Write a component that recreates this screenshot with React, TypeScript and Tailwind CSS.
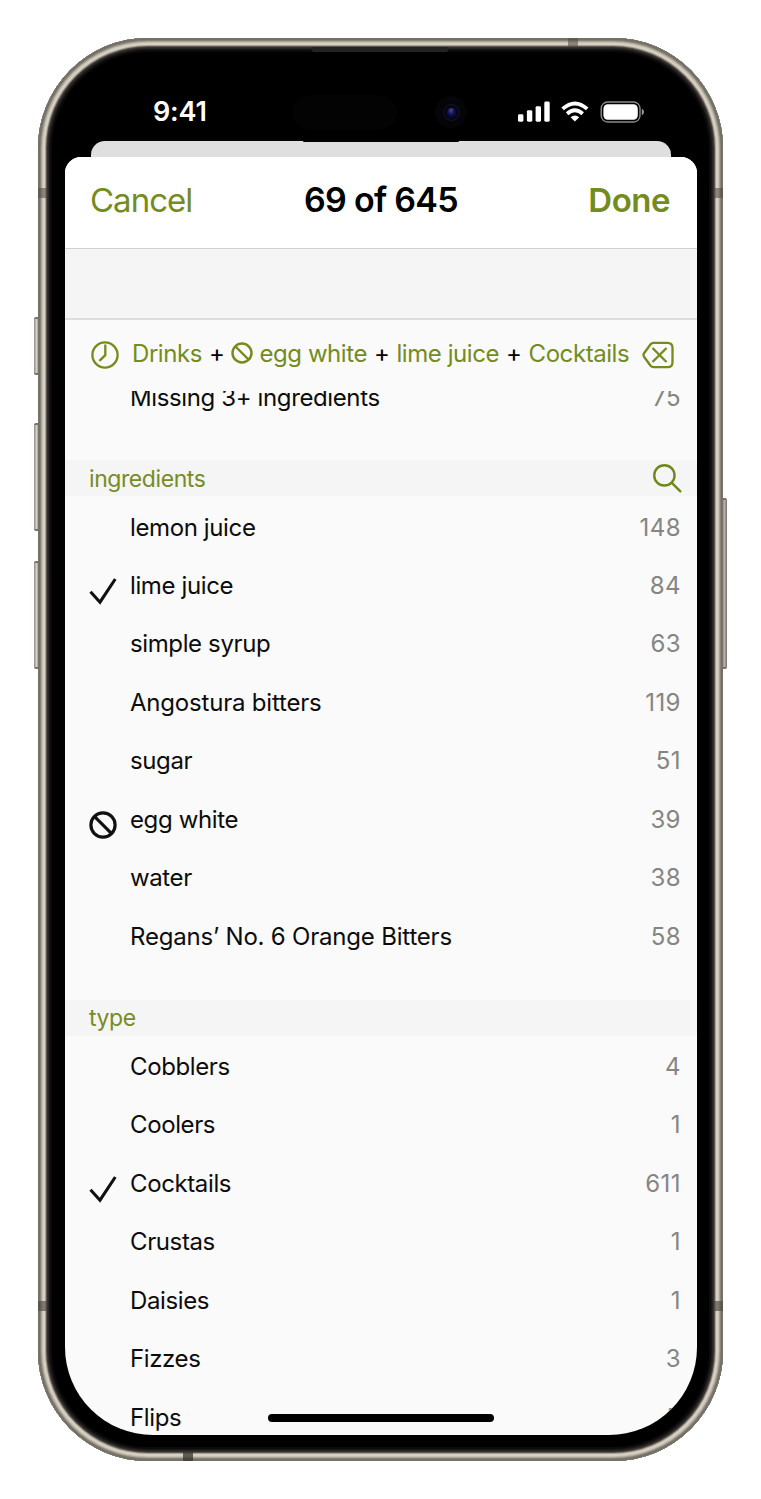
import React from "react";

type Mark = "check" | "ban";
type Item = { name: string; count: string; mark?: Mark; wide?: boolean };

const ingredients: Item[] = [
  { name: "lemon juice", count: "148" },
  { name: "lime juice", count: "84", mark: "check" },
  { name: "simple syrup", count: "63" },
  { name: "Angostura bitters", count: "119", wide: true },
  { name: "sugar", count: "51" },
  { name: "egg white", count: "39", mark: "ban" },
  { name: "water", count: "38" },
  { name: "Regans’ No. 6 Orange Bitters", count: "58", wide: true },
];

const types: Item[] = [
  { name: "Cobblers", count: "4" },
  { name: "Coolers", count: "1" },
  { name: "Cocktails", count: "611", mark: "check" },
  { name: "Crustas", count: "1" },
  { name: "Daisies", count: "1" },
  { name: "Fizzes", count: "3" },
  { name: "Flips", count: "5" },
];

function CheckIcon() {
  return (
    <svg width="28" height="28" viewBox="0 0 28 28" fill="none" stroke="#111" strokeWidth="3.1">
      <path d="M1.5 14.8 L11 25.2 L26.3 2" />
    </svg>
  );
}

function BanIcon({ size, stroke }: { size: number; stroke: number }) {
  return (
    <svg width={size} height={size} viewBox="0 0 28 28" fill="none" stroke="currentColor" strokeWidth={stroke}>
      <circle cx="14" cy="14" r="12.1" />
      <path d="M5.4 5.4 L22.6 22.6" />
    </svg>
  );
}

function Row({ item }: { item: Item }) {
  return (
    <li className="flex h-[58.45px] shrink-0 items-center pr-[16.5px] pl-6">
      <span className="mt-[11px] flex w-[41px] shrink-0 text-[#111]">
        {item.mark === "check" && <CheckIcon />}
        {item.mark === "ban" && <BanIcon size={28} stroke={3.2} />}
      </span>
      <span className={item.wide ? "flex-1 whitespace-nowrap tracking-[-0.2px] text-[#0c0c0c]" : "flex-1 whitespace-nowrap tracking-[-0.38px] text-[#0c0c0c]"}>
        {item.name}
      </span>
      <span className="-mr-[0.4px] tracking-[0.4px] text-[#858585]">{item.count}</span>
    </li>
  );
}

function Section({ title, items, search }: { title: string; items: Item[]; search?: boolean }) {
  return (
    <section className="h-[539.5px] shrink-0">
      <header className="flex h-9 items-center justify-between bg-[#f5f5f5] pr-[15px] pl-6 text-[#768c26]">
        <h2 className="pt-[1px] text-[23px] tracking-[-0.42px]">{title}</h2>
        {search && (
          <svg width="29" height="29" viewBox="0 0 28 28" fill="none" stroke="#6f871b" strokeWidth="2.3" strokeLinecap="round">
            <circle cx="11" cy="11" r="9.8" />
            <path d="M18.2 18.2 L26.4 26.4" />
          </svg>
        )}
      </header>
      <ul className="flex flex-col pt-[2.3px]">
        {items.map((item) => (
          <Row key={item.name} item={item} />
        ))}
      </ul>
    </section>
  );
}

function StatusIcons() {
  return (
    <svg width="126" height="22" viewBox="0 0 126 22" fill="#fff">
      <rect x="0" y="13.3" width="5.4" height="7.4" rx="1.4" />
      <rect x="8.9" y="9.2" width="5.4" height="11.5" rx="1.4" />
      <rect x="17.6" y="5.2" width="5.4" height="15.5" rx="1.4" />
      <rect x="26.3" y="0.6" width="5.4" height="20.1" rx="1.4" />
      <g fill="none" stroke="#fff" strokeWidth="3.8">
        <path d="M44.6 7.9 Q56.9 -3 69.2 7.9" />
        <path d="M49.1 12.7 Q56.9 5.9 64.7 12.7" />
      </g>
      <path d="M56.9 20.6 L52.6 16.3 Q56.9 12.8 61.2 16.3 Z" />
      <rect x="83.2" y="1" width="38.8" height="20" rx="6.4" fill="none" stroke="#8a8a8a" strokeWidth="1.4" />
      <rect x="85.4" y="3.3" width="34.4" height="15.4" rx="4.4" />
      <path d="M123.8 7.8 Q126 8.6 126 11 Q126 13.4 123.8 14.2 Z" fill="#9a9a9a" />
    </svg>
  );
}

function Plus() {
  return <span className="text-black">+</span>;
}

export default function App() {
  return (
    <div className="h-[1499px] w-[761px] bg-white px-[38px] pt-[38px] font-['Inter',sans-serif]">
      <div className="relative h-[1423px] w-[685px]">
        <div className="absolute top-[279px] -left-[4px] h-[58px] w-[5px] rounded-l-[2px] border-y-2 border-[#77736a] bg-linear-to-r from-[#8f8b82] via-[#d3d0c6] to-[#89857a]" />
        <div className="absolute top-[385px] -left-[4px] h-[108px] w-[5px] rounded-l-[2px] border-y-2 border-[#77736a] bg-linear-to-r from-[#8f8b82] via-[#d3d0c6] to-[#89857a]" />
        <div className="absolute top-[523px] -left-[4px] h-[108px] w-[5px] rounded-l-[2px] border-y-2 border-[#77736a] bg-linear-to-r from-[#8f8b82] via-[#d3d0c6] to-[#89857a]" />
        <div className="absolute top-[460px] -right-[4px] h-[171px] w-[5px] rounded-r-[2px] border-y-2 border-[#77706a] bg-linear-to-r from-[#8a827c] via-[#b6aea8] to-[#77706a]" />

        <div className="relative flex h-full w-full flex-col rounded-[110px] bg-black pr-[26px] pl-[27px] shadow-[inset_0_0_0_1px_#77736a,inset_0_0_0_2px_#747066,inset_0_0_0_3px_#89847a,inset_0_0_0_4px_#aaa497,inset_0_0_0_5px_#c8c2b5,inset_0_0_0_7px_#d6d0c4,inset_0_0_0_8px_#a8a196,inset_0_0_0_9px_#5b554e,inset_0_0_0_10px_#35312e,inset_0_0_0_11px_#272423,inset_0_0_0_12px_#1a1817,inset_0_0_0_14px_#0c0b0b]">
          <div className="absolute top-0 left-[530px] h-[9px] w-[10px] bg-[#4d483f]/55" />
          <div className="absolute bottom-0 left-[145px] h-[9px] w-[10px] bg-[#37332e]/75" />
          <div className="absolute top-[150px] left-0 h-[10px] w-[9px] bg-[#4d483f]/55" />
          <div className="absolute top-[150px] right-0 h-[10px] w-[9px] bg-[#4d483f]/55" />
          <div className="absolute top-[1263px] left-0 h-[10px] w-[9px] bg-[#4d483f]/65" />
          <div className="absolute top-[1263px] right-0 h-[10px] w-[9px] bg-[#4d483f]/65" />
          <div className="absolute top-[9px] left-[274px] h-[5px] w-[136px] rounded-b-[2px] bg-[#252322]" />
          <div className="absolute top-[57px] left-[255px] h-[35px] w-[104px] rounded-full bg-[#030303]" />
          <div className="absolute top-[58px] left-[397px] flex size-8 items-center justify-center rounded-full bg-[#050409]">
            <div className="flex size-[17px] items-center justify-center rounded-full border border-[#151129] bg-[#070714]">
              <div className="size-[9px] rounded-full bg-radial-[at_45%_25%] from-[#4c4784] via-[#0c0d50] to-[#080829]" />
            </div>
          </div>

          <div className="flex h-[103px] shrink-0 items-start justify-between pt-[58px] pr-[53px] pl-[88px]">
            <span className="text-[27px] leading-8 font-semibold tracking-[-0.2px] text-white">9:41</span>
            <span className="pt-[5px]"><StatusIcons /></span>
          </div>
          <div className="relative mx-[26px] h-4 shrink-0 rounded-t-[14px] bg-[#dfdfdf]">
            <div className="absolute top-0 left-[212px] h-px w-[156px] rounded-b-full bg-black" />
          </div>

          <main className="relative flex h-[1278px] shrink-0 flex-col overflow-hidden rounded-t-[16px] rounded-b-[88px] bg-[#fafafa] text-[24px] leading-[30px]">
            <div className="grid h-[92px] shrink-0 grid-cols-3 items-center border-b border-[#d2d2d2] bg-white px-[26px] pb-[5px] text-[34px] leading-10 text-[#748b1d]">
              <button className="-ml-px text-left text-[33px] tracking-[-1px]">Cancel</button>
              <h1 className="text-center font-semibold whitespace-nowrap tracking-[-0.7px] text-black">69 of 645</h1>
              <button className="pr-px text-right text-[33px] font-semibold tracking-[-0.5px]">Done</button>
            </div>
            <div className="h-[71px] shrink-0 border-b-2 border-[#dedede] bg-[#f5f5f5]" />

            <div className="flex h-[71px] shrink-0 items-center pr-[23px] pb-[2px] pl-[26px] text-[#748b1d]">
              <svg width="28" height="28" viewBox="0 0 28 28" fill="none" stroke="currentColor" strokeWidth="2.3">
                <circle cx="14" cy="14" r="12.6" />
                <path d="M14.3 3.5 V14.2 L8.4 19.8" />
              </svg>
              <div className="flex flex-1 items-center gap-[7px] pb-[2px] pl-[13px] whitespace-nowrap tracking-[-0.43px]">
                <span>Drinks</span>
                <Plus />
                <span className="flex items-center gap-[6px]">
                  <span className="pb-[2px]"><BanIcon size={22} stroke={3.1} /></span>
                  <span>egg white</span>
                </span>
                <Plus />
                <span>lime juice</span>
                <Plus />
                <span>Cocktails</span>
              </div>
              <svg width="32" height="28" viewBox="0 0 32 28" fill="none" stroke="currentColor" strokeWidth="2.3" strokeLinejoin="round">
                <path d="M11.5 1.8 H25.5 Q30.5 1.8 30.5 6.8 V21.2 Q30.5 26.2 25.5 26.2 H11.5 Q9.8 26.2 8.6 24.8 L2.2 16 Q0.8 14 2.2 12 L8.6 3.2 Q9.8 1.8 11.5 1.8 Z" />
                <path d="M10.5 7 L24.5 21 M24.5 7 L10.5 21" />
              </svg>
            </div>

            <div className="flex min-h-0 flex-1 flex-col overflow-hidden">
              <ul className="-mt-[22.5px] h-[91.5px] shrink-0">
                <Row item={{ name: "Missing 3+ ingredients", count: "75" }} />
              </ul>
              <Section title="ingredients" items={ingredients} search />
              <Section title="type" items={types} />
            </div>

            <div className="absolute bottom-[13px] left-[203px] h-2 w-[226px] rounded-full bg-black" />
          </main>
        </div>
      </div>
    </div>
  );
}
